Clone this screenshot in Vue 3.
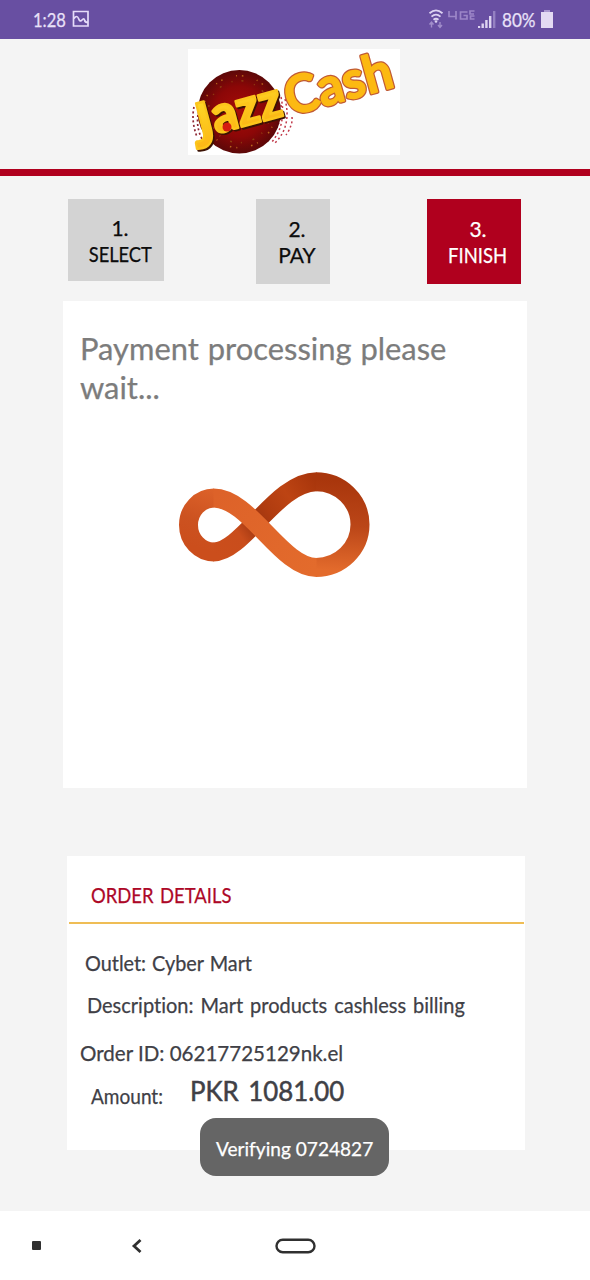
<script setup>
const steps = [
  { n: '1.', label: 'SELECT', cls: 'select' },
  { n: '2.', label: 'PAY', cls: 'pay' },
  { n: '3.', label: 'FINISH', cls: 'finish' }
]
</script>

<template>
  <div class="screen">
    <header class="status">
      <span class="time"><span class="t">1:28</span></span>
      <svg class="pic" width="18" height="18" viewBox="0 0 18 18"><path d="M1.500 1.500h14.500v14.500H1.500zM2 8.500q3-4 4.500 0t3.500 1.500 2.500 0 3.500 2.500" fill="none" stroke="#e6dcfa" stroke-width="1.700" /></svg>
      <svg class="signals" width="70" height="24" viewBox="0 0 70 24">
        <g fill="none" stroke="#ddd3f2" stroke-width="1.800">
          <path d="M1.500 5.200Q8 -.5 14.500 5.200M3.500 8.700Q8 4.600 12.500 8.700M5.500 11.800Q8 9.700 10.500 11.800" />
        </g>
        <circle cx="8" cy="13.500" r="1.300" fill="#ddd3f2" />
        <path d="M3.500 19.500v-5M1.500 16.500l2-2.500 2 2.500M12 14v5.500M10 17l2 2.500 2-2.500" fill="none" stroke="#a18dca" stroke-width="1.400" />
        <path d="M21 3v5.500h7.500M28 3v8.500M39.500 4h-7v7h6.500v-3.500h-3.500M46.500 3h-4.500v3h4M46.500 8h-4v3h4" fill="none" stroke="#9c86c8" stroke-width="1.700" />
        <path d="M50 20v-2h2.200v2zM53.500 20v-4.500h2.400v4.500zM57.200 20v-8h2.400v8zM61 20v-12h2.400v12z" fill="#ded4f1" />
        <path d="M65 20v-17h2.400v17z" fill="#9581c2" />
      </svg>
      <span class="percent"><span class="t">80%</span></span>
      <svg class="battery" width="12" height="19" viewBox="0 0 12 19"><path d="M3 0h6v3H3z" fill="#a997d0" /><path d="M0 2h12v16H0z" fill="#e3daf3" /></svg>
    </header>

    <div class="brand">
      <svg class="logo" width="212" height="106" viewBox="0 0 212 106">
        <defs>
          <radialGradient id="disc"><stop offset="0" stop-color="#a50c08" /><stop offset=".6" stop-color="#8c0707" /><stop offset="1" stop-color="#5c0808" /></radialGradient>
          <linearGradient id="gold" x1="0" y1="0" x2="0" y2="1"><stop offset="0" stop-color="#ffe12a" /><stop offset="1" stop-color="#fbae12" /></linearGradient>
        </defs>
        <path d="M0 0h212v106H0z" fill="#fff" />
        <g fill="none" stroke-dasharray="2 2.500">
          <path d="M6 58Q3 72 9 88M10 66Q8 78 14 90" stroke="#8d2734" stroke-width="1.700" />
          <path d="M93 48Q99 76 83 94M97 50Q104 77 87 94M93 56Q96 74 80 88M104 68Q105 76 98 86" stroke="#c0394a" stroke-width="1.500" />
        </g>
        <circle cx="51.300" cy="62.700" r="41.700" fill="url(#disc)" />
        <circle cx="51.300" cy="62.700" r="36" fill="none" stroke="#b9651c" stroke-width="1.500" stroke-dasharray="1.500 14 1 5" />
        <circle cx="51.300" cy="62.700" r="31" fill="none" stroke="#8f3d12" stroke-width="1.500" stroke-dasharray="1 9 2 11" />
        <g transform="translate(12 90) rotate(-15)">
          <g class="jazz shade"><text x="-5" y="11" class="big" textLength="23" lengthAdjust="spacingAndGlyphs">J</text><text x="18" y="1" textLength="71" lengthAdjust="spacingAndGlyphs">azz</text></g>
          <g class="jazz"><text x="-6" y="9" class="big" textLength="23" lengthAdjust="spacingAndGlyphs">J</text><text x="17" y="-1" textLength="71" lengthAdjust="spacingAndGlyphs">azz</text></g>
        </g>
        <circle cx="39" cy="78" r="4.500" fill="#d51c10" />
        <g transform="translate(102 67) rotate(-15.500)">
          <text class="cash edge" x="0" y="0" textLength="110" lengthAdjust="spacingAndGlyphs">Cash</text>
          <text class="cash" x="0" y="0" textLength="110" lengthAdjust="spacingAndGlyphs">Cash</text>
        </g>
      </svg>
    </div>

    <nav class="steps">
      <div v-for="s in steps" :key="s.n" class="step" :class="s.cls"><span>{{ s.n }}</span><span class="name">{{ s.label }}</span></div>
    </nav>

    <main class="processing">
      <h1><span class="t">Payment processing please</span><br><span class="t">wait...</span></h1>
      <svg class="loader" width="220" height="130" viewBox="0 0 220 130">
        <defs>
          <linearGradient id="left" gradientUnits="userSpaceOnUse" x1="60" y1="30" x2="40" y2="90"><stop offset="0" stop-color="#de632a" /><stop offset=".6" stop-color="#cc5220" /><stop offset="1" stop-color="#cb4e1c" /></linearGradient>
          <linearGradient id="right" gradientUnits="userSpaceOnUse" x1="165" y1="20" x2="160" y2="110"><stop offset="0" stop-color="#a9360c" /><stop offset=".5" stop-color="#bb4618" /><stop offset="1" stop-color="#e36b2c" /></linearGradient>
          <linearGradient id="under" gradientUnits="userSpaceOnUse" x1="49" y1="92" x2="151" y2="22"><stop offset="0" stop-color="#cb4e1c" /><stop offset=".25" stop-color="#c94d1c" /><stop offset=".4" stop-color="#9c3510" /><stop offset=".55" stop-color="#b03c10" /><stop offset=".75" stop-color="#bd4413" /><stop offset="1" stop-color="#a9360c" /></linearGradient>
          <linearGradient id="over" gradientUnits="userSpaceOnUse" x1="49" y1="38" x2="151" y2="107"><stop offset="0" stop-color="#dd6229" /><stop offset="1" stop-color="#e36b2c" /></linearGradient>
        </defs>
        <g fill="none" stroke-width="19">
          <path d="M48.500 92C78 92 112 21.700 151.500 21.700" stroke="url(#under)" />
          <path d="M49 38A25.500 27 0 0 0 49 92" stroke="url(#left)" />
          <path d="M151 21.700A44 42.850 0 0 1 151 107.400" stroke="url(#right)" />
          <path d="M48.500 38C85 38 116 107.400 151.500 107.400" stroke="url(#over)" />
        </g>
      </svg>
    </main>

    <section class="order">
      <h2><span class="t">ORDER DETAILS</span></h2>
      <p class="outlet"><span class="t">Outlet: Cyber Mart</span></p>
      <p class="description"><span class="t">Description: Mart products cashless billing</span></p>
      <p class="order-id"><span class="t">Order ID: 06217725129nk.el</span></p>
      <p class="amount"><span class="t">Amount:</span><strong class="t">PKR 1081.00</strong></p>
    </section>

    <div class="toast"><span class="t">Verifying 0724827</span></div>

    <footer class="keys">
      <span class="recent"></span>
      <svg class="back" width="12" height="16" viewBox="0 0 12 16"><path d="M9.500 2L3 8l6.500 6" fill="none" stroke="#303030" stroke-width="2.800" /></svg>
      <svg class="home" width="41" height="16" viewBox="0 0 41 16"><rect x="1.500" y="1.700" width="38" height="12.600" rx="6.300" fill="none" stroke="#303030" stroke-width="2.400" /></svg>
    </footer>
  </div>
</template>

<style>
body { margin: 0; }
</style>

<style scoped>
.screen { position: relative; width: 590px; height: 1280px; overflow: hidden; display: flex; flex-direction: column; background: #f4f4f4; font-family: Lato, "Open Sans", sans-serif; font-variant-ligatures: none; color: #404046; -webkit-text-stroke: 0.25px currentColor; }
.t { display: inline-block; transform-origin: 0 50%; }
.status { height: 39px; flex: none; display: flex; align-items: flex-start; background: #684fa2; color: #e9e1f8; font-size: 19px; line-height: 39px; box-sizing: border-box; padding-left: 33px; }
.time { width: 39px; }
.time .t { transform: scaleX(0.87); }
.pic { margin-top: 10px; }
.signals { margin: 8px 0 0 338px; }
.percent { width: 39px; margin-left: 4px; }
.percent .t { transform: scaleX(0.9); }
.battery { margin-top: 10px; }
.brand { flex: none; height: 137px; box-sizing: border-box; border-bottom: 7px solid #b0001e; padding: 10px 0 0 188px; }
.logo { display: block; -webkit-text-stroke: 0; }
.jazz text { font: 900 51px Lato, sans-serif; fill: url(#gold); stroke: #fcc51b; stroke-width: 2.5; stroke-linejoin: round; }
.jazz .big { font-size: 61px; }
.jazz.shade text { fill: #3b1204; stroke: #3b1204; }
.cash { font: 700 52px Lato, sans-serif; fill: #fcb912; stroke: #fcb912; stroke-width: 1.5; stroke-linejoin: round; }
.cash.edge { stroke: #c05a35; stroke-width: 4; }
.steps { height: 102px; flex: none; display: flex; align-items: flex-start; padding: 23px 0 0 68px; }
.step { box-sizing: border-box; height: 85px; background: #d3d3d3; color: #0c0c0c; display: flex; flex-direction: column; align-items: center; padding: 17px 0 0 8px; font-size: 21px; line-height: 26px; }
.select { width: 96px; height: 82px; padding-top: 16px; }
.select .name { transform: scaleX(0.87); }
.pay { width: 74px; margin-left: 92px; }
.finish { width: 94px; margin-left: 97px; background: #b0001e; color: #fff; }
.finish .name { transform: scaleX(0.88); }
.processing { flex: none; width: 464px; height: 487px; margin-left: 63px; background: #fff; box-sizing: border-box; padding: 28px 0 0 17px; }
h1 { margin: 0; font-size: 31px; font-weight: 400; line-height: 39px; word-spacing: 1px; color: #7c7c7c; white-space: nowrap; }
h1 .t { transform: scaleX(0.997); }
.loader { display: block; margin: 53px 0 0 85px; }
.order { flex: none; width: 458px; height: 294px; margin: 68px 0 0 67px; background: #fff; }
h2 { margin: 0 1px 0 2px; height: 68px; box-sizing: border-box; border-bottom: 2px solid #efbd55; padding: 24px 0 0 22px; font-size: 21px; line-height: 30px; font-weight: 400; word-spacing: 2px; color: #ad0827; }
h2 .t { transform: scaleX(0.878); }
p { margin: 0; font-size: 21.500px; line-height: 30px; white-space: nowrap; }
.outlet { padding: 24px 0 0 18px; word-spacing: 1px; }
.outlet .t { transform: scaleX(0.923); }
.description { padding: 12px 0 0 20px; word-spacing: 2px; }
.description .t { transform: scaleX(0.93); }
.order-id { padding: 18px 0 0 13px; }
.order-id .t { transform: scaleX(0.955); }
.amount { padding: 13px 0 0 24px; display: flex; }
.amount .t { transform: scaleX(0.885); }
.amount strong.t { font-size: 26px; line-height: 21px; font-weight: 400; margin-left: 18px; word-spacing: 3px; transform: scaleX(0.992); -webkit-text-stroke-width: 0.5px; }
.toast { position: absolute; left: 200px; top: 1118px; width: 189px; height: 58px; border-radius: 16px; background: #656565; color: #fff; box-sizing: border-box; padding-left: 16px; font-size: 20px; line-height: 60px; white-space: nowrap; }
.toast .t { transform: scaleX(0.955); }
.keys { height: 69px; flex: none; margin-top: 61px; background: #fff; display: flex; align-items: center; }
.recent { width: 9px; height: 9px; margin-left: 32px; background: #303030; border-radius: 1px; }
.back { margin-left: 90px; }
.home { margin-left: 132px; }
</style>
